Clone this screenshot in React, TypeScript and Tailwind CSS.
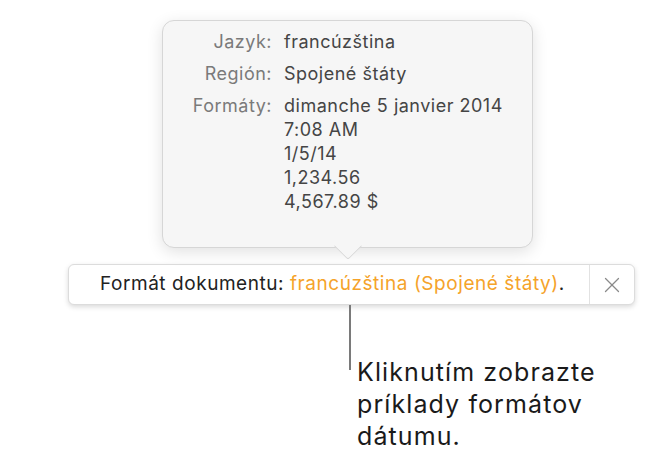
import { X } from "lucide-react";

const rows: { label: string; values: string[] }[] = [
  { label: "Jazyk:", values: ["francúzština"] },
  { label: "Región:", values: ["Spojené štáty"] },
  {
    label: "Formáty:",
    values: ["dimanche 5 janvier 2014", "7:08 AM", "1/5/14", "1,234.56", "4,567.89 $"],
  },
];

export default function App() {
  return (
    <div className="w-[657px] h-[465px] bg-white overflow-hidden font-['Inter',sans-serif]">
      {/* Popover */}
      <div className="relative ml-[162px] mt-[20px] w-[371px] h-[228px]">
        <div className="absolute inset-0 rounded-[12px] bg-[#f6f6f6] border border-[#d6d6d6] shadow-[0_4px_16px_rgba(0,0,0,0.12)]" />
        <div className="absolute left-1/2 -bottom-[8px] -ml-[10px] w-[20px] h-[20px] rotate-45 bg-[#f6f6f6] border-r border-b border-[#d6d6d6] rounded-br-[3px]" />
        <div className="relative flex flex-col gap-[8px] pt-[10px] text-[18px] leading-[24px] tracking-[0.5px]">
          {rows.map((r) => (
            <div key={r.label} className="flex">
              <div className="w-[110px] text-right text-[#7a7a7a]">{r.label}</div>
              <div className="pl-[12px] text-[#454545] flex flex-col">
                {r.values.map((v) => (
                  <span key={v}>{v}</span>
                ))}
              </div>
            </div>
          ))}
        </div>
      </div>

      {/* Bar */}
      <div className="ml-[68px] mt-[16px] w-[567px] h-[41px] flex rounded-[6px] bg-white border border-[#dcdcdc] shadow-[0_2px_5px_rgba(0,0,0,0.15)]">
        <div className="flex-1 flex items-center pl-[31px] text-[19px] tracking-[0.55px] text-[#222] whitespace-nowrap">
          Formát dokumentu:&nbsp;<span className="text-[#f5a32a]">francúzština (Spojené štáty)</span>.
        </div>
        <div className="w-[45px] border-l border-[#e2e2e2] flex items-center justify-center text-[#8a8a8a]">
          <X size={26} strokeWidth={1.2} />
        </div>
      </div>

      {/* Callout */}
      <div className="ml-[349px] flex">
        <div className="w-[2px] h-[65px] bg-[#7a7a7a]" />
        <div className="pl-[6px] pt-[51px] text-[25px] leading-[32px] tracking-[1.1px] text-[#1a1a1a] whitespace-nowrap">
          Kliknutím zobrazte
          <br />
          príklady formátov
          <br />
          dátumu.
        </div>
      </div>
    </div>
  );
}
